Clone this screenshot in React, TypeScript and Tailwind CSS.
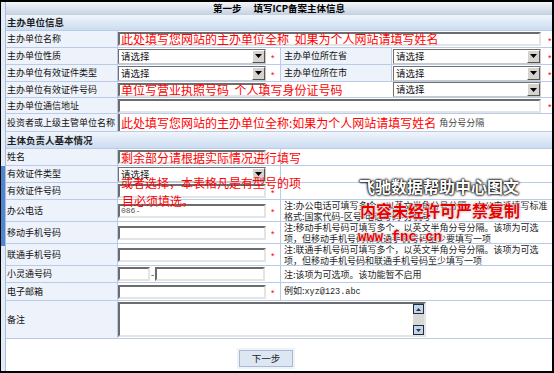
import React from 'react';

function Star({ className = '' }: { className?: string }) {
  return <span className={`mt-[4px] font-['Liberation_Sans',sans-serif] text-[9px] leading-none text-[#f00] ${className}`}>*</span>;
}

function Select() {
  return (
    <div className="flex h-[15px] w-[148px] shrink-0 border border-[#6f6f6f] border-b-[#c9c9c9] border-r-[#c9c9c9] bg-white">
      <span className="flex-1 pl-[2px] text-[9.5px] leading-[13px] text-[#111]">请选择</span>
      <span className="flex w-[13px] items-center justify-center border border-white border-b-[#555] border-r-[#555] bg-[#d6d3ce]">
        <svg width="7" height="4" viewBox="0 0 7 4">
          <path d="M0 0h7L3.5 4z" fill="#000" />
        </svg>
      </span>
    </div>
  );
}

function Input({ className = '', children }: { className?: string; children?: React.ReactNode }) {
  return (
    <div className={`h-[14px] shrink-0 border-2 border-[#6c6c6c] border-b-[#e4e4e4] border-r-[#e4e4e4] bg-white ${className}`}>
      {children}
    </div>
  );
}

function Label({ children }: { children?: React.ReactNode }) {
  return (
    <div className="flex w-[112px] shrink-0 items-center border-r border-[#b9cbe6] bg-[#eef3fb] pl-[1px] text-[9px] whitespace-nowrap text-[#111]">
      {children}
    </div>
  );
}

function Note({ children }: { children?: React.ReactNode }) {
  return <div className="flex flex-1 flex-col justify-center pl-[3px] text-[9px] leading-[11px] whitespace-nowrap">{children}</div>;
}

export default function App() {
  return (
    <div className="relative flex h-[373px] w-[554px] overflow-hidden border-y-2 border-r-2 border-black bg-white font-['Noto_Sans_CJK_SC',sans-serif] text-[9.5px] text-[#1e1e1e]">
      {/* left frame strip */}
      <div className="flex w-[5px] shrink-0 flex-col border-l border-black bg-[#e3ebf6]">
        <div className="h-[164px]" />
        <div className="h-[80px] bg-[#4f86cd]" />
      </div>

      <div className="flex flex-1 flex-col border-l border-[#a9bedf]">
        <div className="flex h-[13px] items-center justify-center bg-linear-to-b from-[#f5f7fa] to-[#c4d0e1] font-bold text-black">
          <span className="mr-[12px]">第一步</span>
          <span>填写ICP备案主体信息</span>
        </div>
        <div className="flex h-[16px] items-center border-b border-[#b9cbe6] bg-linear-to-b from-[#f0f5fb] to-[#cbdcf1] pl-[1px] font-bold">
          主办单位信息
        </div>

        <div className="flex h-[17px] border-b border-[#b9cbe6]">
          <Label>主办单位名称</Label>
          <div className="flex flex-1 items-center">
            <Input className="w-[423px] overflow-visible">
              <span className="block pl-[1px] text-[12px] leading-[10px] whitespace-nowrap text-[#f00]">
                此处填写您网站的主办单位全称&nbsp;&nbsp;如果为个人网站请填写姓名
              </span>
            </Input>
            <Star className="ml-[7px]" />
          </div>
        </div>

        <div className="flex h-[17px] border-b border-[#b9cbe6]">
          <Label>主办单位性质</Label>
          <div className="flex w-[163px] shrink-0 items-center border-r border-[#b9cbe6]">
            <Select />
            <Star className="ml-[5px]" />
          </div>
          <div className="flex w-[111px] shrink-0 items-center border-r border-[#b9cbe6] bg-[#eef3fb] pl-[3px] text-[9px] text-[#111]">主办单位所在省</div>
          <div className="flex flex-1 items-center pl-[1px]">
            <Select />
            <Star className="ml-[7px]" />
          </div>
        </div>

        <div className="flex h-[17px] border-b border-[#b9cbe6]">
          <Label>主办单位有效证件类型</Label>
          <div className="flex w-[163px] shrink-0 items-center border-r border-[#b9cbe6]">
            <Select />
            <Star className="ml-[5px]" />
          </div>
          <div className="flex w-[111px] shrink-0 items-center border-r border-[#b9cbe6] bg-[#eef3fb] pl-[3px] text-[9px] text-[#111]">主办单位所在市</div>
          <div className="flex flex-1 items-center pl-[1px]">
            <Select />
            <Star className="ml-[7px]" />
          </div>
        </div>

        <div className="flex h-[16px] border-b border-[#b9cbe6]">
          <Label>主办单位有效证件号码</Label>
          <div className="flex flex-1 items-center">
            <Input className="w-[148px] overflow-visible">
              <span className="block pl-[1px] text-[12px] leading-[10px] whitespace-nowrap text-[#f00]">
                单位写营业执照号码&nbsp;&nbsp;个人填写身份证号码
              </span>
            </Input>
            <div className="ml-[127px]">
              <Select />
            </div>
          </div>
        </div>

        <div className="flex h-[16px] border-b border-[#b9cbe6]">
          <Label>主办单位通信地址</Label>
          <div className="flex flex-1 items-center">
            <Input className="w-[423px]" />
            <Star className="ml-[7px]" />
          </div>
        </div>

        <div className="flex h-[18px] border-b border-[#b9cbe6]">
          <Label>投资者或上级主管单位名称</Label>
          <div className="flex flex-1 items-center border-l-2 border-[#6c6c6c] pl-[1px] whitespace-nowrap">
            <span className="text-[12px] leading-[14px] text-[#f00]">此处填写您网站的主办单位全称:如果为个人网站请填写姓名</span>
            <span className="ml-[3px] text-[9px] text-[#444]">角分号分隔</span>
          </div>
        </div>

        <div className="flex h-[17px] items-center border-b border-[#b9cbe6] bg-linear-to-b from-[#f0f5fb] to-[#cbdcf1] pl-[1px] font-bold">
          主体负责人基本情况
        </div>

        <div className="flex h-[17px] border-b border-[#b9cbe6]">
          <Label>姓名</Label>
          <div className="flex w-[163px] shrink-0 items-center border-r border-[#b9cbe6]">
            <Input className="w-[148px]" />
          </div>
          <Note />
        </div>

        <div className="flex h-[17px] border-b border-[#b9cbe6]">
          <Label>有效证件类型</Label>
          <div className="flex w-[163px] shrink-0 items-center border-r border-[#b9cbe6]">
            <Select />
          </div>
          <Note />
        </div>

        <div className="flex h-[17px] border-b border-[#b9cbe6]">
          <Label>有效证件号码</Label>
          <div className="flex w-[163px] shrink-0 items-center border-r border-[#b9cbe6]">
            <Input className="w-[148px]" />
            <Star className="ml-[5px]" />
          </div>
          <Note />
        </div>

        <div className="flex h-[22px] border-b border-[#b9cbe6]">
          <Label>办公电话</Label>
          <div className="flex w-[163px] shrink-0 items-center border-r border-[#b9cbe6]">
            <Input className="w-[148px]">
              <span className="block pl-[1px] font-['Liberation_Mono',monospace] text-[8px] leading-[10px] text-[#555]">086-</span>
            </Input>
            <Star className="ml-[5px]" />
          </div>
          <Note>
            <span>注:办公电话可填写多个，以英文半角分号分隔。办公电话填写标准</span>
            <span>格式:国家代码-区号-电话号码-分机号</span>
          </Note>
        </div>

        <div className="flex h-[22px] border-b border-[#b9cbe6]">
          <Label>移动手机号码</Label>
          <div className="flex w-[163px] shrink-0 items-center border-r border-[#b9cbe6]">
            <Input className="w-[148px]" />
            <Star className="ml-[5px]" />
          </div>
          <Note>
            <span>注:移动手机号码可填写多个，以英文半角分号分隔。该项为可选</span>
            <span>项，但移动手机号码和联通手机号码至少要填写一项</span>
          </Note>
        </div>

        <div className="flex h-[22px] border-b border-[#b9cbe6]">
          <Label>联通手机号码</Label>
          <div className="flex w-[163px] shrink-0 items-center border-r border-[#b9cbe6]">
            <Input className="w-[148px]" />
            <Star className="ml-[5px]" />
          </div>
          <Note>
            <span>注:联通手机号码可填写多个，以英文半角分号分隔。该项为可选</span>
            <span>项，但移动手机号码和联通手机号码至少填写一项</span>
          </Note>
        </div>

        <div className="flex h-[17px] border-b border-[#b9cbe6]">
          <Label>小灵通号码</Label>
          <div className="flex w-[163px] shrink-0 items-center border-r border-[#b9cbe6]">
            <Input className="w-[32px]" />
            <span className="mx-[1px] text-[9px] leading-none">-</span>
            <Input className="w-[110px]" />
          </div>
          <Note>
            <span>注:该项为可选项。该功能暂不启用</span>
          </Note>
        </div>

        <div className="flex h-[18px] border-b border-[#b9cbe6]">
          <Label>电子邮箱</Label>
          <div className="flex w-[163px] shrink-0 items-center border-r border-[#b9cbe6]">
            <Input className="w-[148px]" />
            <Star className="ml-[5px]" />
          </div>
          <Note>
            <span>
              例如:<span className="font-['Liberation_Mono',monospace] text-[8.5px]">xyz@123.abc</span>
            </span>
          </Note>
        </div>

        <div className="flex h-[38px] border-b border-[#b9cbe6]">
          <Label>备注</Label>
          <div className="flex flex-1 items-center">
            <div className="flex h-[35px] w-[308px] border-2 border-[#6c6c6c] border-b-[#e4e4e4] border-r-[#e4e4e4] bg-white">
              <div className="flex-1" />
              <div className="flex w-[11px] flex-col bg-[#d8d8d8]">
                <div className="flex h-[10px] items-center justify-center border border-[#2b2b2b] bg-[#bcd6f3]">
                  <svg width="5" height="3" viewBox="0 0 5 3"><path d="M0 3h5L2.5 0z" fill="#333" /></svg>
                </div>
                <div className="flex-1" />
                <div className="flex h-[10px] items-center justify-center border border-[#2b2b2b] bg-[#bcd6f3]">
                  <svg width="5" height="3" viewBox="0 0 5 3"><path d="M0 0h5L2.5 3z" fill="#333" /></svg>
                </div>
              </div>
            </div>
          </div>
        </div>

        <div className="flex flex-1 items-start pl-[231px] pt-[9px]">
          <div className="bg-[#eef3fa] p-[2px]">
            <div className="flex h-[17px] w-[54px] items-center justify-center border border-[#a9bad2] bg-[#dde6f3] text-[9.5px] text-[#222]">
              下一步
            </div>
          </div>
        </div>
      </div>

      {/* red annotations */}
      <div className="absolute left-[121px] top-[149px] text-[12px] leading-[14px] whitespace-nowrap text-[#f00]">剩余部分请根据实际情况进行填写</div>
      <div className="absolute left-[121px] top-[174px] text-[12px] leading-[14px] whitespace-nowrap text-[#f00]">或者选择，本表格凡是有型号的项</div>
      <div className="absolute left-[122px] top-[192px] text-[12px] leading-[14px] whitespace-nowrap text-[#f00]">目必须填选。</div>

      {/* watermark */}
      <div className="absolute left-[359px] top-[176px] text-[16px] leading-[16px] font-bold whitespace-nowrap text-white [text-shadow:0_0_2px_#000,0_0_2px_#000,0_0_3px_#000]">
        飞驰数据帮助中心图文
      </div>
      <div className="absolute left-[360px] top-[200px] text-[16px] leading-[16px] font-bold whitespace-nowrap text-[#e60000] [text-shadow:0_0_1px_#fff,0_0_2px_#fff,0_0_3px_#888]">
        内容未经许可严禁复制
      </div>
      <div className="absolute left-[358px] top-[227px] font-['Liberation_Mono',monospace] text-[14px] leading-[16px] font-bold whitespace-nowrap text-[#e60000] [text-shadow:0_0_1px_#fff,0_0_2px_#fff,0_0_3px_#888]">
        www.fnc.cn
      </div>
    </div>
  );
}
